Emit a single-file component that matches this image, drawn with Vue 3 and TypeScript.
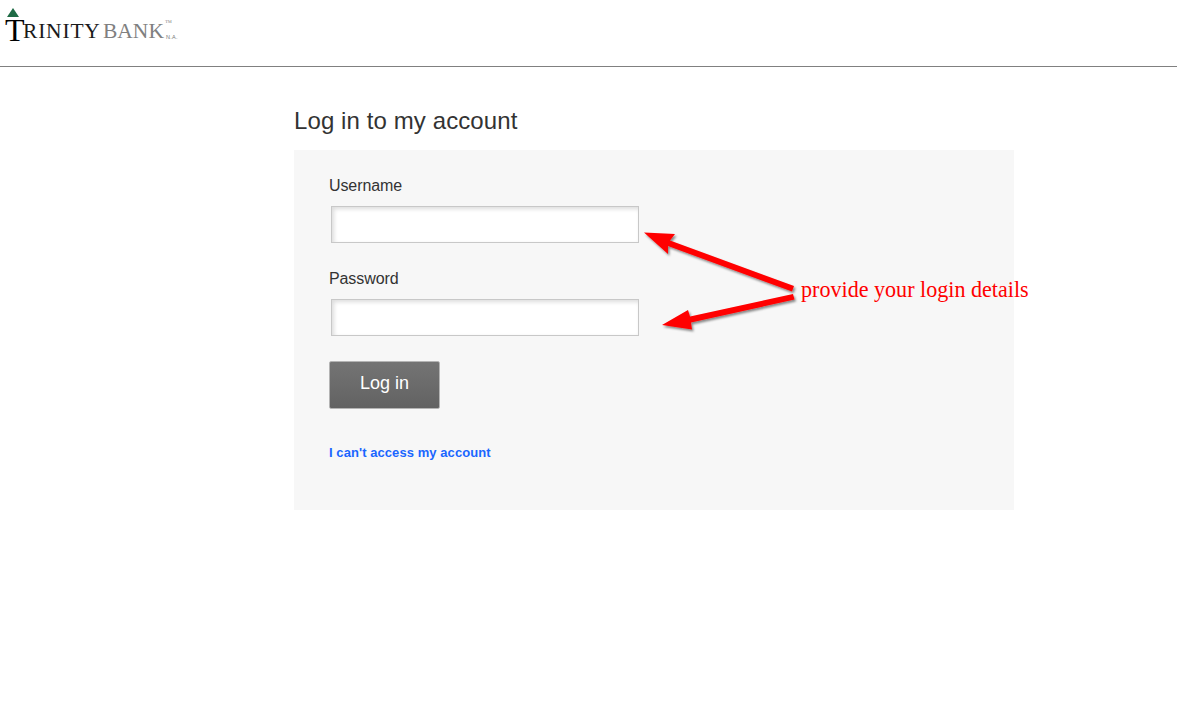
<script setup lang="ts">
const fields: { label: string; type: string }[] = [
  { label: 'Username', type: 'text' },
  { label: 'Password', type: 'password' },
]
</script>

<template>
  <div class="page">
    <header class="header">
      <div class="logo">
        <svg class="peak" width="12" height="9" viewBox="0 0 12 9"><path d="M6 0 L12 9 L0 9 Z" fill="#1f6b45" /></svg>
        <span class="t">T</span><span class="rinity">RINITY</span><span class="bank">BANK</span><span class="tm">™</span><span class="na">N.A.</span>
      </div>
    </header>
    <main class="main">
      <h1 class="title">Log in to my account</h1>
      <form class="panel" @submit.prevent>
        <div v-for="f in fields" :key="f.label" class="field">
          <label class="label">{{ f.label }}</label>
          <input class="input" :type="f.type" />
        </div>
        <button class="btn" type="button">Log in</button>
        <a class="link" href="#">I can't access my account</a>
      </form>
    </main>
    <svg class="arrows" width="1177" height="717" viewBox="0 0 1177 717">
      <defs>
        <filter id="sh" x="-20%" y="-20%" width="140%" height="140%">
          <feDropShadow dx="1.5" dy="2" stdDeviation="1.2" flood-color="#000" flood-opacity="0.45" />
        </filter>
      </defs>
      <g fill="#ff0000" filter="url(#sh)">
        <path d="M644 232.5 L675 234 L670 240.5 L794 286 L792 291.5 L668 246 L668 254 Z" />
        <path d="M662 325 L688 310 L690 316.5 L793 294 L794.5 299.5 L691 322.5 L692 329.5 Z" />
      </g>
    </svg>
    <div class="note">provide your login details</div>
  </div>
</template>

<style>
html, body { margin: 0; background: #fff; }
</style>

<style scoped>
.page {
  position: relative;
  width: 1177px;
  height: 717px;
  overflow: hidden;
  background: #fff;
  font-family: "Liberation Sans", Arial, sans-serif;
}
.header {
  height: 66px;
  border-bottom: 1px solid #808080;
  box-sizing: content-box;
}
.logo {
  position: relative;
  width: 180px;
  height: 66px;
  font-family: "Liberation Serif", "Times New Roman", serif;
}
.peak { position: absolute; left: 7px; top: 8px; }
.t, .rinity, .bank, .tm, .na { position: absolute; white-space: nowrap; }
.t { left: 5px; top: 12px; font-size: 32px; line-height: 36px; color: #000; }
.rinity { left: 23px; top: 18px; font-size: 21.5px; line-height: 26px; color: #1a1a1a; letter-spacing: 0.8px; }
.bank { left: 103px; top: 18px; font-size: 21.5px; line-height: 26px; color: #808080; }
.tm { left: 165px; top: 19px; font-size: 7px; line-height: 8px; color: #888; }
.na { left: 166px; top: 34px; font-size: 5.5px; line-height: 7px; color: #777; font-family: "Liberation Sans", sans-serif; letter-spacing: 0.3px; }
.main {
  width: 720px;
  margin-left: 294px;
}
.title {
  margin: 0;
  padding-top: 40px;
  height: 43px;
  font-size: 24px;
  font-weight: 400;
  line-height: 28px;
  color: #333;
  letter-spacing: 0.1px;
}
.panel {
  display: flex;
  flex-direction: column;
  align-items: flex-start;
  box-sizing: border-box;
  height: 360px;
  padding: 27px 35px 0;
  background: #f7f7f7;
}
.field {
  display: flex;
  flex-direction: column;
  height: 93px;
}
.label {
  font-size: 16px;
  line-height: 18px;
  color: #333;
  letter-spacing: -0.1px;
}
.input {
  box-sizing: border-box;
  width: 308px;
  height: 37px;
  margin: 11px 0 0 2px;
  padding: 0;
  border: 1px solid #c8c8c8;
  border-radius: 0;
  outline: none;
  background: #fff;
  box-shadow: inset 2px 2px 4px rgba(0, 0, 0, 0.14);
}
.btn {
  box-sizing: border-box;
  width: 111px;
  height: 48px;
  margin-top: -2px;
  padding: 0 0 4px;
  border: 1px solid #b4b4b4;
  border-radius: 2px;
  background: linear-gradient(#747474, #626262);
  color: #fff;
  font-family: inherit;
  font-size: 18px;
  line-height: 20px;
}
.link {
  margin-top: 36px;
  font-size: 13px;
  font-weight: 700;
  line-height: 15px;
  color: #1a66ff;
  text-decoration: none;
  letter-spacing: 0.07px;
}
.arrows { position: absolute; left: 0; top: 0; pointer-events: none; }
.note {
  position: absolute;
  left: 801px;
  top: 277px;
  font-family: "Liberation Serif", "Times New Roman", serif;
  font-size: 22.1px;
  line-height: 26px;
  color: #f00;
  white-space: nowrap;
}
</style>
